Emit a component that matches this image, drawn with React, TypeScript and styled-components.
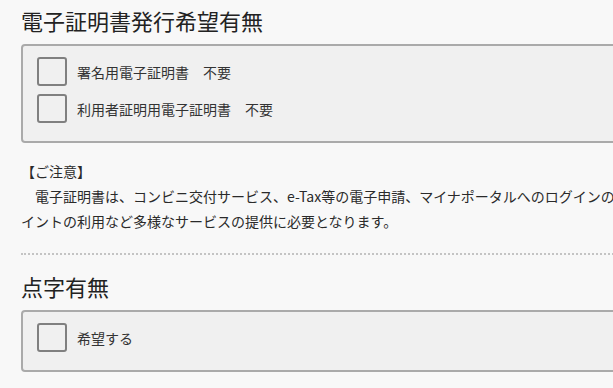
import React, { useState } from "react";
import styled, { createGlobalStyle } from "styled-components";

const GlobalStyle = createGlobalStyle`
  html, body {
    margin: 0;
    padding: 0;
    background: #f8f8f8;
    overflow: hidden;
  }

  body {
    font-family: "Noto Sans CJK JP", "Noto Sans", sans-serif;
    color: #333;
  }
`;

const Page = styled.main`
  width: 760px;
  padding: 4px 0 0 21px;
`;

const Heading = styled.h2<{ $spaced?: boolean }>`
  margin: ${(p) => (p.$spaced ? "15px" : "0")} 0 8px;
  font-size: 22px;
  line-height: 32px;
  font-weight: 400;
  color: #222;
`;

const OptionBox = styled.div`
  display: flex;
  flex-direction: column;
  gap: 8px;
  padding: 11px 14px 18px;
  background: #f0f0f0;
  border: 2px solid #aaa;
  border-radius: 4px;
`;

const OptionRow = styled.label`
  display: flex;
  align-items: center;
  gap: 10px;
  height: 29px;
  font-size: 14px;
  color: #333;
  cursor: pointer;
`;

const Box = styled.span<{ $checked: boolean }>`
  flex: 0 0 auto;
  box-sizing: border-box;
  width: 30px;
  height: 29px;
  border: 2px solid #808080;
  border-radius: 3px;
  background: ${(p) => (p.$checked ? "#dfe8f5" : "#f0f0f0")};
  display: flex;
  align-items: center;
  justify-content: center;
`;

const Notice = styled.div`
  margin-top: 16px;
  padding-bottom: 19px;
  border-bottom: 2px dotted #c4c4c4;
  font-size: 14px;
  line-height: 25px;
  color: #2a2a2a;
`;

const NoticeTitle = styled.p`
  margin: 0;
`;

const NoticeBody = styled.p`
  margin: 0;
  text-indent: 1em;
`;

type Option = { id: string; label: string };

function Check({ option }: { option: Option }) {
  const [checked, setChecked] = useState(false);
  return (
    <OptionRow onClick={() => setChecked(!checked)}>
      <Box $checked={checked}>
        {checked && (
          <svg width="18" height="18" viewBox="0 0 18 18">
            <path d="M3 9l4 4 8-9" fill="none" stroke="#333" strokeWidth="2.4" />
          </svg>
        )}
      </Box>
      {option.label}
    </OptionRow>
  );
}

const certOptions: Option[] = [
  { id: "sign", label: "署名用電子証明書　不要" },
  { id: "user", label: "利用者証明用電子証明書　不要" },
];

const brailleOptions: Option[] = [{ id: "braille", label: "希望する" }];

export default function App() {
  return (
    <>
      <GlobalStyle />
      <Page>
        <Heading>電子証明書発行希望有無</Heading>
        <OptionBox>
          {certOptions.map((o) => (
            <Check key={o.id} option={o} />
          ))}
        </OptionBox>

        <Notice>
          <NoticeTitle>【ご注意】</NoticeTitle>
          <NoticeBody>
            電子証明書は、コンビニ交付サービス、e-Tax等の電子申請、マイナポータルへのログインのほか、マイナポ
            <br />
            イントの利用など多様なサービスの提供に必要となります。
          </NoticeBody>
        </Notice>

        <Heading $spaced>点字有無</Heading>
        <OptionBox>
          {brailleOptions.map((o) => (
            <Check key={o.id} option={o} />
          ))}
        </OptionBox>
      </Page>
    </>
  );
}
